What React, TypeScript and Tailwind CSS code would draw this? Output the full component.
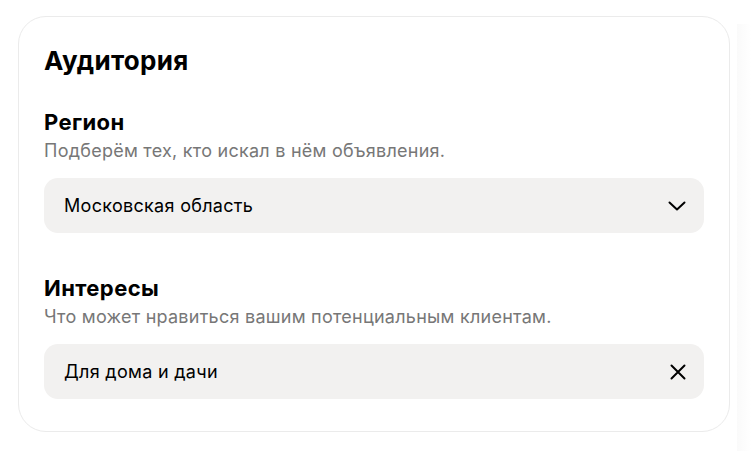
function ChevronDown() {
  return (
    <svg width="18" height="10" viewBox="0 0 18 10" fill="none" stroke="#000" strokeWidth="2" strokeLinecap="round" strokeLinejoin="round">
      <path d="M1.5 1.5L9 8.5L16.5 1.5" />
    </svg>
  )
}

function Cross() {
  return (
    <svg width="16" height="16" viewBox="0 0 16 16" fill="none" stroke="#000" strokeWidth="2" strokeLinecap="round">
      <path d="M1.5 1.5L14.5 14.5M14.5 1.5L1.5 14.5" />
    </svg>
  )
}

interface FieldProps {
  title: string
  hint: string
  value: string
  icon: React.ReactNode
  className?: string
}

function Field({ title, hint, value, icon, className = '' }: FieldProps) {
  return (
    <div className={className}>
      <h3 className="text-[22px] leading-[28px] font-bold text-black tracking-[0.4px]">{title}</h3>
      <p className="mt-[3px] text-[18px] leading-[24px] text-[#777] tracking-[0.25px]">{hint}</p>
      <div className="mt-[15px] h-[55px] rounded-[14px] bg-[#f2f1f0] flex items-center justify-between pl-5 pr-[18px]">
        <span className="text-[18px] text-black tracking-[0.3px]">{value}</span>
        {icon}
      </div>
    </div>
  )
}

export default function App() {
  return (
    <div className="w-[751px] h-[451px] bg-white flex overflow-hidden" style={{ fontFamily: 'Inter, "Noto Sans", sans-serif' }}>
      <div className="ml-[18px] mt-4 w-[712px] h-[416px] shrink-0 rounded-[28px] border border-[#ebebeb] bg-white px-[25px] pt-[28px]">
        <h2 className="text-[26px] leading-[32px] font-bold text-black tracking-[0.3px]">Аудитория</h2>
        <Field
          className="mt-[31px]"
          title="Регион"
          hint="Подберём тех, кто искал в нём объявления."
          value="Московская область"
          icon={<ChevronDown />}
        />
        <Field
          className="mt-[41px]"
          title="Интересы"
          hint="Что может нравиться вашим потенциальным клиентам."
          value="Для дома и дачи"
          icon={<Cross />}
        />
      </div>
      <div className="ml-[7px] mt-6 flex-1 bg-gradient-to-r from-[#fafafa] to-white" />
    </div>
  )
}
